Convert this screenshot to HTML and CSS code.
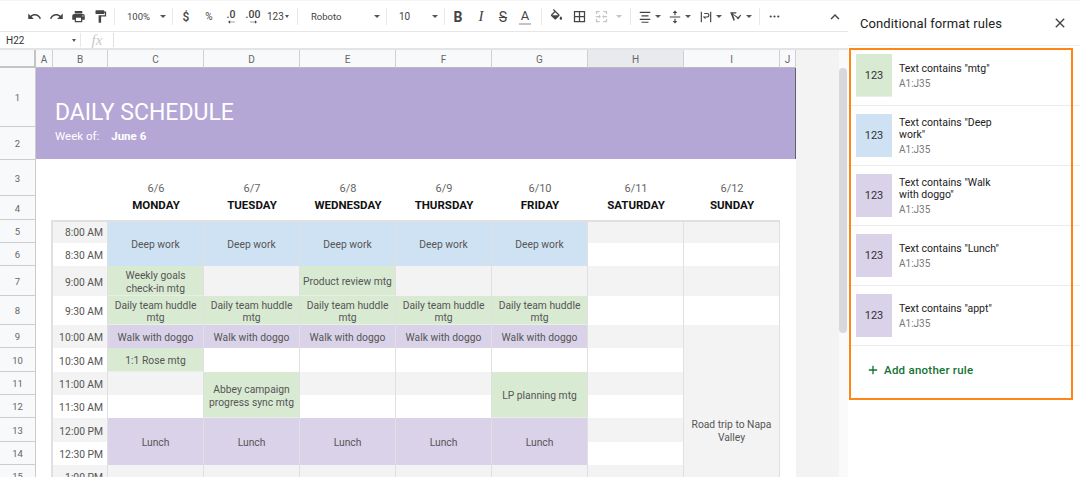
FILE: index.html
```html
<!DOCTYPE html>
<html lang="en">
<head>
<meta charset="utf-8">
<title>Daily schedule</title>
<link rel="stylesheet" href="styles.css">
</head>
<body>
<div class="app">
<main class="main">
  <div class="toolbar">
    <button class="tb w22"><svg viewBox="0 0 24 24" class="ic"><path d="M12.5 8c-2.65 0-5.05.99-6.9 2.6L2 7v9h9l-3.62-3.62c1.39-1.16 3.16-1.88 5.12-1.88 3.54 0 6.55 2.31 7.6 5.5l2.37-.78C21.08 11.03 17.15 8 12.5 8z"/></svg></button>
    <button class="tb w22"><svg viewBox="0 0 24 24" class="ic"><path d="M18.4 10.6C16.55 8.99 14.15 8 11.5 8c-4.65 0-8.58 3.03-9.96 7.22L3.9 16c1.05-3.19 4.05-5.5 7.6-5.5 1.95 0 3.73.72 5.12 1.88L13 16h9V7l-3.6 3.6z"/></svg></button>
    <button class="tb w22"><svg viewBox="0 0 24 24" class="ic"><path d="M19 8H5c-1.66 0-3 1.34-3 3v6h4v4h12v-4h4v-6c0-1.66-1.34-3-3-3zm-3 11H8v-5h8v5zm3-7c-.55 0-1-.45-1-1s.45-1 1-1 1 .45 1 1-.45 1-1 1zm-1-9H6v4h12V3z"/></svg></button>
    <button class="tb w22"><svg viewBox="0 0 24 24" class="ic"><path d="M18 4V3c0-.55-.45-1-1-1H5c-.55 0-1 .45-1 1v4c0 .55.45 1 1 1h12c.55 0 1-.45 1-1V6h1v4H9v11c0 .55.45 1 1 1h2c.55 0 1-.45 1-1v-9h8V4h-3z"/></svg></button>
    <span class="sep"></span>
    <button class="tb zoom"><span>100%</span><i class="caret"></i></button>
    <span class="sep"></span>
    <button class="tb w22 strong">$</button>
    <button class="tb w22 small">%</button>
    <button class="tb w22 dec"><span>.0</span><svg viewBox="0 0 10 5" class="arrow"><path d="M0 2.5 3 0v2h7v1H3v2z"/></svg></button>
    <button class="tb w22 dec"><span>.00</span><svg viewBox="0 0 10 5" class="arrow"><path d="M10 2.5 7 0v2H0v1h7v2z"/></svg></button>
    <button class="tb num"><span>123</span><i class="caret sm"></i></button>
    <span class="sep"></span>
    <button class="tb font"><span>Roboto</span><i class="caret"></i></button>
    <span class="sep"></span>
    <button class="tb size"><span>10</span><i class="caret"></i></button>
    <span class="sep"></span>
    <button class="tb w22 glyph b">B</button>
    <button class="tb w22 glyph it">I</button>
    <button class="tb w22 glyph st">S</button>
    <button class="tb w22 glyph col"><span>A</span></button>
    <span class="sep"></span>
    <button class="tb w22"><svg viewBox="0 0 24 24" class="ic"><path d="M16.56 8.94 7.62 0 6.21 1.41l2.38 2.38-5.15 5.15c-.59.59-.59 1.54 0 2.12l5.5 5.5c.29.29.68.44 1.06.44s.77-.15 1.06-.44l5.5-5.5c.59-.58.59-1.53 0-2.12zM5.21 10 10 5.21 14.79 10H5.21zM19 11.5s-2 2.17-2 3.5c0 1.1.9 2 2 2s2-.9 2-2c0-1.33-2-3.5-2-3.5z"/></svg></button>
    <button class="tb w24"><svg viewBox="0 0 24 24" class="ic"><path d="M3 3v18h18V3H3zm8 16H5v-6h6v6zm0-8H5V5h6v6zm8 8h-6v-6h6v6zm0-8h-6V5h6v6z"/></svg></button>
    <button class="tb merge"><svg viewBox="0 0 24 24" class="ic faint"><path d="M3 3h6v2H5v3H3V3zm12 0h6v5h-2V5h-4V3zM3 16h2v3h4v2H3v-5zm16 0h2v5h-6v-2h4v-3zM3 11h5V9l3 3-3 3v-2H3v-2zm18 0h-5V9l-3 3 3 3v-2h5v-2z"/></svg><i class="caret faintc"></i></button>
    <span class="sep"></span>
    <button class="tb ar"><svg viewBox="0 0 24 24" class="ic"><path d="M3 3h18v2H3zM6 9h12v2H6zM3 15h18v2H3zM6 20h12v2H6z"/></svg><i class="caret"></i></button>
    <button class="tb ar"><svg viewBox="0 0 24 24" class="ic"><path d="M3 11h18v2H3zM12 1l-4 4h3v4h2V5h3zM12 23l4-4h-3v-4h-2v4H8z"/></svg><i class="caret"></i></button>
    <button class="tb ar"><svg viewBox="0 0 24 24" class="ic"><path d="M3 3h2v18H3zM19 3h2v18h-2zM7 11h7a2 2 0 0 0 0-4H9V5h5a4 4 0 0 1 0 8h-3v3l-4-4z"/></svg><i class="caret"></i></button>
    <button class="tb ar"><svg viewBox="0 0 24 24" class="ic"><path d="M2 4h11l-1 2H6l9 6 2-1 2-3 2 1-5 7-2-1-1-2L7 8l3 9-2 2L2 4z"/></svg><i class="caret"></i></button>
    <span class="sep"></span>
    <button class="tb more"><svg viewBox="0 0 24 24" class="ic"><circle cx="5" cy="12" r="2"/><circle cx="12" cy="12" r="2"/><circle cx="19" cy="12" r="2"/></svg></button>
    <button class="tb collapse"><svg viewBox="0 0 24 24" class="ic"><path d="m7.4 15.4-1.4-1.4 6-6 6 6-1.4 1.4-4.6-4.6z"/></svg></button>
  </div>
  <div class="fbar">
    <div class="namebox"><span>H22</span><i class="caret sm"></i></div>
    <div class="fx">fx</div>
  </div>
  <div class="sheetwrap">
    <div class="sheet">
      <div class="corner"></div>
      <div class="ch">A</div><div class="ch">B</div><div class="ch">C</div><div class="ch">D</div><div class="ch">E</div><div class="ch">F</div><div class="ch">G</div><div class="ch sel">H</div><div class="ch">I</div><div class="ch">J</div>

      <div class="rn">1</div>
      <div class="banner"><h1>DAILY SCHEDULE</h1><p>Week of:<b>June 6</b></p></div>
      <div class="rn">2</div>

      <div class="rn">3</div>
      <div></div><div></div>
      <div class="date">6/6</div><div class="date">6/7</div><div class="date">6/8</div><div class="date">6/9</div><div class="date">6/10</div><div class="date">6/11</div><div class="date">6/12</div>
      <div></div>

      <div class="rn">4</div>
      <div></div><div class="top"></div>
      <div class="day top">MONDAY</div><div class="day top">TUESDAY</div><div class="day top">WEDNESDAY</div><div class="day top">THURSDAY</div><div class="day top">FRIDAY</div><div class="day top">SATURDAY</div><div class="day top">SUNDAY</div>
      <div></div>

      <div class="rn">5</div><div class="a"></div><div class="t g">8:00 AM</div>
      <div class="c blue s2">Deep work</div><div class="c blue s2">Deep work</div><div class="c blue s2">Deep work</div><div class="c blue s2">Deep work</div><div class="c blue s2">Deep work</div>
      <div class="c g"></div><div class="c g"></div><div></div>

      <div class="rn">6</div><div class="a"></div><div class="t">8:30 AM</div>
      <div class="c"></div><div class="c"></div><div></div>

      <div class="rn">7</div><div class="a"></div><div class="t g">9:00 AM</div>
      <div class="c green">Weekly goals<br>check-in mtg</div><div class="c g"></div><div class="c green">Product review mtg</div><div class="c g"></div><div class="c g"></div><div class="c g"></div><div class="c g"></div><div></div>

      <div class="rn">8</div><div class="a"></div><div class="t">9:30 AM</div>
      <div class="c green">Daily team huddle mtg</div><div class="c green">Daily team huddle mtg</div><div class="c green">Daily team huddle mtg</div><div class="c green">Daily team huddle mtg</div><div class="c green">Daily team huddle mtg</div><div class="c"></div><div class="c"></div><div></div>

      <div class="rn">9</div><div class="a"></div><div class="t g">10:00 AM</div>
      <div class="c purple">Walk with doggo</div><div class="c purple">Walk with doggo</div><div class="c purple">Walk with doggo</div><div class="c purple">Walk with doggo</div><div class="c purple">Walk with doggo</div><div class="c g"></div><div class="c g trip">Road trip to Napa Valley</div><div></div>

      <div class="rn">10</div><div class="a"></div><div class="t">10:30 AM</div>
      <div class="c green">1:1 Rose mtg</div><div class="c"></div><div class="c"></div><div class="c"></div><div class="c"></div><div class="c"></div><div></div>

      <div class="rn">11</div><div class="a"></div><div class="t g">11:00 AM</div>
      <div class="c g"></div><div class="c green s2">Abbey campaign progress sync mtg</div><div class="c g"></div><div class="c g"></div><div class="c green s2">LP planning mtg</div><div class="c g"></div><div></div>

      <div class="rn">12</div><div class="a"></div><div class="t">11:30 AM</div>
      <div class="c"></div><div class="c"></div><div class="c"></div><div class="c"></div><div></div>

      <div class="rn">13</div><div class="a"></div><div class="t g">12:00 PM</div>
      <div class="c purple s2">Lunch</div><div class="c purple s2">Lunch</div><div class="c purple s2">Lunch</div><div class="c purple s2">Lunch</div><div class="c purple s2">Lunch</div><div class="c g"></div><div></div>

      <div class="rn">14</div><div class="a"></div><div class="t">12:30 PM</div>
      <div class="c"></div><div></div>

      <div class="rn">15</div><div class="a"></div><div class="t g">1:00 PM</div>
      <div class="c g"></div><div class="c g"></div><div class="c g"></div><div class="c g"></div><div class="c g"></div><div class="c g"></div><div></div>
    </div>
    <div class="gutter"></div>
    <div class="vscroll"><div class="thumb"></div></div>
  </div>
</main>
<aside class="panel">
  <header class="phead"><h2>Conditional format rules</h2>
    <svg viewBox="0 0 24 24" class="close"><path d="M19 6.41 17.59 5 12 10.59 6.41 5 5 6.41 10.59 12 5 17.59 6.41 19 12 13.41 17.59 19 19 17.59 13.41 12z"/></svg>
  </header>
  <div class="rule"><div class="sw green">123</div><div class="rt"><div class="rn1">Text contains "mtg"</div><div class="rr">A1:J35</div></div></div>
  <div class="rule"><div class="sw blue">123</div><div class="rt"><div class="rn1">Text contains "Deep work"</div><div class="rr">A1:J35</div></div></div>
  <div class="rule"><div class="sw purple">123</div><div class="rt"><div class="rn1">Text contains "Walk with doggo"</div><div class="rr">A1:J35</div></div></div>
  <div class="rule"><div class="sw purple">123</div><div class="rt"><div class="rn1">Text contains "Lunch"</div><div class="rr">A1:J35</div></div></div>
  <div class="rule"><div class="sw purple">123</div><div class="rt"><div class="rn1">Text contains "appt"</div><div class="rr">A1:J35</div></div></div>
  <div class="add"><svg viewBox="0 0 12 12" class="plus"><path d="M5.2 1h1.6v4.2H11v1.6H6.8V11H5.2V6.8H1V5.2h4.2z"/></svg><span>Add another rule</span></div>
  <div class="highlight"></div>
</aside>
</div>
</body>
</html>
```
FILE: styles.css
```css
* { box-sizing: border-box; }
html, body { margin: 0; height: 100%; overflow: hidden; background: #fff; }
body { font-family: Roboto, "Liberation Sans", sans-serif; color: #444; }
.app { display: flex; width: 1080px; height: 477px; overflow: hidden; }
.main { width: 848px; flex: none; display: flex; flex-direction: column; }

.toolbar { height: 32px; display: flex; align-items: center; padding: 1px 0 0 23px; background: #fff; border-top: 1px solid #f4f4f4; border-bottom: 1px solid #e6e6e6; }
.tb { height: 22px; padding: 0; border: 0; background: none; font: inherit; font-size: 10px; color: #444; display: flex; align-items: center; justify-content: center; flex: none; }
.w22 { width: 22px; }
.w24 { width: 24px; }
.ic { width: 15px; height: 15px; fill: #444; display: block; }
.faint { fill: #c4c4c4; }
.sep { width: 1px; height: 17px; background: #e8e8e8; margin: 0 3px; flex: none; }
.caret { display: block; width: 0; height: 0; border: 3px solid transparent; border-top: 3.5px solid #555; border-bottom: 0; flex: none; }
.caret.sm { border-width: 2.5px; border-top-width: 3px; border-bottom: 0; }
.faintc { border-top-color: #c4c4c4; }
.zoom { width: 51px; justify-content: flex-start; padding-left: 9px; gap: 10px; font-size: 9.5px; }
.strong { font-size: 12px; font-weight: 500; padding-right: 2px; }
.small { font-size: 10px; }
.dec { flex-direction: column; font-weight: 500; font-size: 10.5px; line-height: 10px; }
.arrow { width: 7px; height: 4px; fill: #444; display: block; }
.num { width: 30px; gap: 1px; font-size: 10px; justify-content: flex-start; padding-left: 3px; }
.font { width: 82px; justify-content: flex-start; padding-left: 10px; gap: 33px; font-size: 9.5px; }
.size { width: 51px; justify-content: flex-start; padding-left: 9px; gap: 22px; }
.glyph { font-size: 14px; }
.b { font-weight: 700; padding-right: 2px; }
.it { font-style: italic; font-family: "Liberation Serif", serif; font-size: 15px; }
.st { text-decoration: line-through; }
.col { margin-right: 2px; }
.col span { border-bottom: 2px solid #c4c4c4; line-height: 15px; padding: 0 2px; font-size: 13px; }
.merge { width: 36px; justify-content: flex-start; padding-left: 3px; gap: 7px; }
.ar { width: 30.5px; gap: 3px; }
.ar .ic { width: 14px; height: 14px; }
.more { width: 22px; }
.more .ic { width: 13px; height: 13px; }
.collapse { width: 28px; margin-left: 36px; }
.collapse .ic { width: 18px; height: 18px; }

.fbar { height: 18px; display: flex; align-items: center; border-bottom: 2px solid #e4e4e4; background: #fff; flex: none; }
.namebox { width: 81px; height: 14px; padding: 1px 4px 0 6px; display: flex; align-items: center; justify-content: space-between; font-size: 10px; color: #333; border-right: 1px solid #e8e8e8; }
.fx { width: 33px; height: 14px; line-height: 14px; text-align: center; font-family: "Liberation Serif", serif; font-style: italic; font-size: 15px; color: #c8c8c8; border-right: 1px solid #e0e0e0; }

.sheetwrap { display: flex; height: 427px; overflow: hidden; }
.sheet { width: 796px; flex: none; display: grid; align-content: start;
  grid-template-columns: 36px 17px 55px repeat(7, 96px) 16px;
  grid-template-rows: 18px 59px 33px 36px 24px 23px 23px 30px 29px 23px 24px 23px 23px 24px 23px 23px;
  grid-auto-rows: 23px; font-size: 10.3px; background: #fff; }
.corner { background: #f8f9fa; border-right: 2px solid #c4c4c4; border-bottom: 2px solid #c4c4c4; }
.ch { background: #f8f9fa; color: #666; font-size: 10px; display: flex; align-items: center; justify-content: center; padding-top: 1px; border-right: 1px solid #d0d0d0; border-bottom: 1px solid #bbb; }
.sel { background: #e8eaed; }
.rn { grid-column: 1; background: #f8f9fa; color: #666; font-size: 9.5px; display: flex; align-items: center; justify-content: center; padding-top: 1px; border-right: 1px solid #ccc; border-bottom: 1px solid #ccc; }
.banner { grid-column: span 10; grid-row: span 2; background: #b4a7d6; color: #fff; padding: 31px 0 0 19px; border-right: 1px solid #5f6368; margin-bottom: 1px; }
.banner h1 { margin: 0; font-size: 23px; font-weight: 400; line-height: 28px; }
.banner p { margin: 1px 0 0; font-size: 11.5px; line-height: 16px; }
.banner b { font-weight: 700; margin-left: 12px; }
.date { text-align: center; color: #666; font-size: 11px; padding-top: 22px; line-height: 14px; }
.day { text-align: center; color: #111; font-size: 11.5px; font-weight: 700; line-height: 18px; }
.top { position: relative; z-index: 1; box-shadow: 0 2px 0 #e0e0e0; }
.a { border-right: 2px solid #e0e0e0; }
.t { display: flex; align-items: center; justify-content: flex-end; padding: 2px 4px 0 0; color: #555; font-size: 10.3px; border-right: 1px solid #e0e0e0; }
.g { background: #f3f3f3; }
.c { display: flex; align-items: center; justify-content: center; text-align: center; line-height: 12.5px; color: #555; padding: 4px 2px 0; font-size: 10.3px; border-right: 1px solid #e0e0e0; }
.blue { background: #cfe2f3; }
.green { background: #d9ead3; border-bottom: 1px solid #e8efe5; }
.purple { background: #d9d2e9; }
.s2 { grid-row: span 2; }
.trip { grid-row: span 9; padding: 4px 6px 0; }

.gutter { width: 43px; flex: none; background: #f3f3f3; }
.vscroll { width: 9px; flex: none; background: #fafafa; }
.thumb { width: 8px; height: 265px; margin-top: 18px; background: #d6d8dc; border-radius: 4px; }

.panel { width: 232px; flex: none; position: relative; background: #fff; border-top: 1px solid #f4f4f4; }
.phead { height: 45px; display: flex; align-items: center; justify-content: space-between; padding: 0 12px; border-bottom: 1px solid #efefef; }
.phead h2 { margin: 0; font-size: 13px; font-weight: 400; color: #222; letter-spacing: .1px; }
.close { width: 16px; height: 16px; fill: #444; }
.rule { height: 60px; display: flex; padding: 8px 0 0 8px; gap: 7px; border-bottom: 1px solid #ececec; }
.sw { width: 36px; height: 43px; display: flex; align-items: center; justify-content: center; font-size: 11px; color: #333; }
.rt { width: 102px; height: 43px; padding-top: 2px; display: flex; flex-direction: column; justify-content: center; }
.rn1 { font-size: 10.5px; line-height: 12px; color: #222; }
.rr { font-size: 10px; line-height: 12px; color: #777; margin-top: 3px; }
.add { display: flex; align-items: center; gap: 6px; padding: 17px 0 0 20px; color: #137333; font-size: 11.5px; font-weight: 500; letter-spacing: .25px; }
.plus { width: 10px; height: 10px; fill: #137333; }
.highlight { position: absolute; left: 1px; top: 47px; width: 224px; height: 352px; border: 2px solid #ff8614; pointer-events: none; }
```
